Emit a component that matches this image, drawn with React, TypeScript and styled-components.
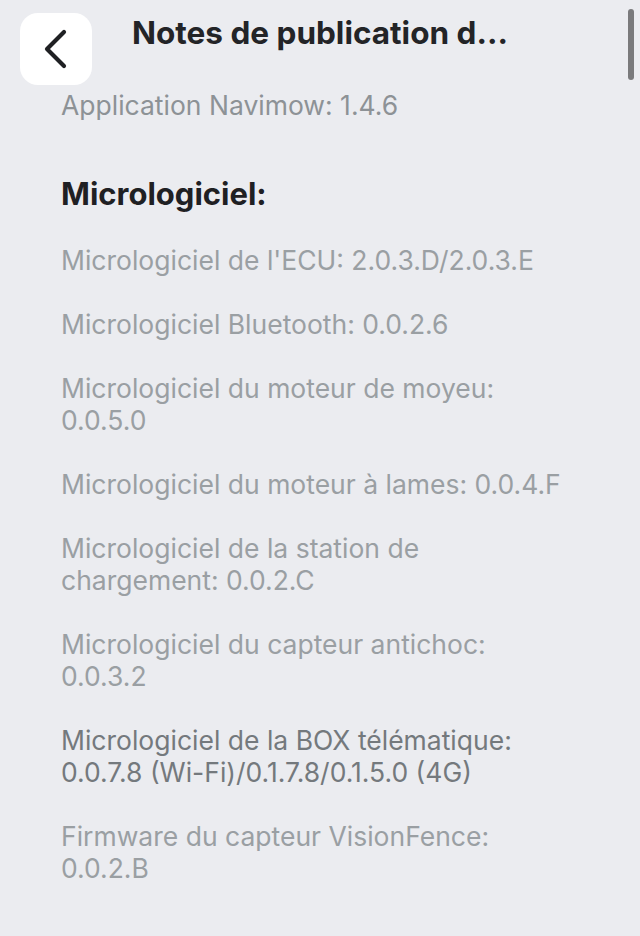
import React from "react";
import styled, { createGlobalStyle } from "styled-components";

const Global = createGlobalStyle`
  html, body { margin: 0; padding: 0; background: #ebecf0; }
  body { font-family: Inter, "Noto Sans", sans-serif; -webkit-font-smoothing: antialiased; }
`;

const Page = styled.div`
  position: relative;
  width: 640px;
  height: 936px;
  overflow: hidden;
  background: #ebecf0;
`;

const Header = styled.header`
  display: grid;
  grid-template-columns: 72px 1fr 72px;
  align-items: center;
  padding: 13px 20px 0 20px;
`;

const BackButton = styled.button`
  width: 72px;
  height: 72px;
  border: none;
  border-radius: 18px;
  background: #ffffff;
  display: flex;
  align-items: center;
  justify-content: center;
  padding: 0;
`;

const Title = styled.h1`
  margin: 0;
  align-self: start;
  padding-top: 1px;
  text-align: center;
  font-size: 31.5px;
  line-height: 38px;
  font-weight: 700;
  color: #232427;
  white-space: nowrap;
`;

const Scrollbar = styled.div`
  position: absolute;
  top: 9px;
  right: 6px;
  width: 6px;
  height: 71px;
  border-radius: 3px;
  background: #7a7a7c;
`;

const Content = styled.main`
  display: flex;
  flex-direction: column;
  padding: 4px 40px 0 61px;
`;

const AppVersion = styled.p`
  margin: 0;
  font-size: 26.5px;
  line-height: 32px;
  color: #8d9296;
`;

const SectionTitle = styled.h2`
  margin: 55px 0 0 0;
  font-size: 31px;
  line-height: 36px;
  font-weight: 700;
  color: #1f2023;
`;

const List = styled.div`
  display: flex;
  flex-direction: column;
  gap: 32px;
  margin-top: 32px;
`;

const Item = styled.p<{ $strong?: boolean }>`
  margin: 0;
  font-size: 26.5px;
  line-height: 32px;
  color: ${(p) => (p.$strong ? "#74797d" : "#9a9fa3")};
  max-width: 505px;
`;

const items: { text: string; strong?: boolean }[] = [
  { text: "Micrologiciel de l'ECU: 2.0.3.D/2.0.3.E" },
  { text: "Micrologiciel Bluetooth: 0.0.2.6" },
  { text: "Micrologiciel du moteur de moyeu: 0.0.5.0" },
  { text: "Micrologiciel du moteur à lames: 0.0.4.F" },
  { text: "Micrologiciel de la station de chargement: 0.0.2.C" },
  { text: "Micrologiciel du capteur antichoc: 0.0.3.2" },
  { text: "Micrologiciel de la BOX télématique: 0.0.7.8 (Wi-Fi)/0.1.7.8/0.1.5.0 (4G)", strong: true },
  { text: "Firmware du capteur VisionFence: 0.0.2.B" },
];

export default function App() {
  return (
    <Page>
      <Global />
      <Header>
        <BackButton aria-label="Retour">
          <svg width="26" height="40" viewBox="0 0 26 40" fill="none">
            <path d="M21 3 L4 20 L21 37" stroke="#1f2023" strokeWidth="4.2" strokeLinecap="round" strokeLinejoin="round" />
          </svg>
        </BackButton>
        <Title>Notes de publication d...</Title>
        <span />
      </Header>
      <Scrollbar />
      <Content>
        <AppVersion>Application Navimow: 1.4.6</AppVersion>
        <SectionTitle>Micrologiciel:</SectionTitle>
        <List>
          {items.map((it) => (
            <Item key={it.text} $strong={it.strong}>
              {it.text}
            </Item>
          ))}
        </List>
      </Content>
    </Page>
  );
}
